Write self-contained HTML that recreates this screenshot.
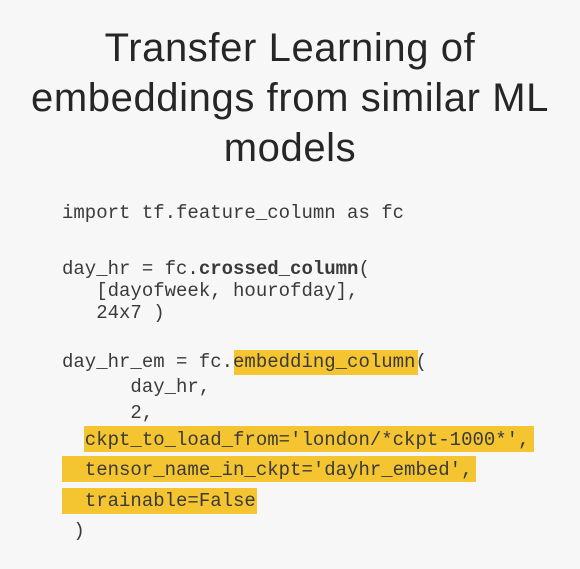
<!DOCTYPE html>
<html><head><meta charset="utf-8"><style>
html,body{margin:0;padding:0;}
body{width:580px;height:569px;background:#f7f7f7;position:relative;overflow:hidden;}
.t{position:absolute;left:0;width:580px;text-align:center;font-family:"Liberation Sans",sans-serif;font-size:40px;letter-spacing:0.6px;color:#262626;line-height:50px;top:23px;}
.c{position:absolute;font-family:"Liberation Mono",monospace;font-size:19px;color:#3a3a3a;white-space:pre;line-height:22px;}
.h{position:absolute;background:#f4c531;}
</style></head><body>
<div class="t">Transfer Learning of<br>embeddings from similar ML<br>models</div>
<div class="h" style="left:234px;top:350px;width:184px;height:25px"></div>
<div class="h" style="left:84px;top:426px;width:450px;height:26px"></div>
<div class="h" style="left:62px;top:456px;width:414px;height:26px"></div>
<div class="h" style="left:62px;top:488px;width:195px;height:26px"></div>
<div class="c" style="left:62px;top:202px">import tf.feature_column as fc</div>
<div class="c" style="left:62px;top:258px">day_hr = fc.<b>crossed_column</b>(</div>
<div class="c" style="left:62px;top:280px">   [dayofweek, hourofday],</div>
<div class="c" style="left:62px;top:302px">   24x7 )</div>
<div class="c" style="left:62px;top:351px">day_hr_em = fc.embedding_column(</div>
<div class="c" style="left:62px;top:376px">      day_hr,</div>
<div class="c" style="left:62px;top:402px">      2,</div>
<div class="c" style="left:62px;top:429px">  ckpt_to_load_from='london/*ckpt-1000*',</div>
<div class="c" style="left:62px;top:459px">  tensor_name_in_ckpt='dayhr_embed',</div>
<div class="c" style="left:62px;top:490px">  trainable=False</div>
<div class="c" style="left:62px;top:520px"> )</div>
</body></html>
